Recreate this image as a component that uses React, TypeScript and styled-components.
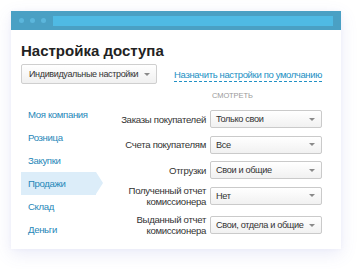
import React from "react";
import styled, { createGlobalStyle } from "styled-components";

const Global = createGlobalStyle`
  html, body { margin: 0; padding: 0; background: #ffffff; }
  body { font-family: "Liberation Sans", Arial, sans-serif; color: #333; }
`;

const Page = styled.div`
  padding: 11px 0 0 11px;
  width: 360px;
  height: 269px;
  box-sizing: border-box;
`;

const Card = styled.div`
  width: 330px;
  background: #fff;
  box-shadow: 0 5px 16px rgba(90, 100, 200, 0.13), 0 0 4px rgba(90, 100, 200, 0.05);
`;

const TitleBar = styled.div`
  height: 19px;
  background: #4aa0c4;
  display: flex;
  align-items: center;
  padding: 0 8px 0 8px;
  gap: 4px;
  box-sizing: border-box;
`;

const Dot = styled.span`
  width: 5px;
  height: 5px;
  border-radius: 50%;
  background: #5bb6dc;
  flex: none;
  margin-right: 2px;
`;

const UrlBar = styled.div`
  flex: 1;
  height: 10px;
  background: #4fbae4;
  margin-left: 1px;
`;

const Content = styled.div`
  padding: 12px 19px 8px 10px;
`;

const Title = styled.h1`
  margin: 0;
  font-size: 15px;
  line-height: 17px;
  font-weight: bold;
  color: #222;
`;

const Toolbar = styled.div`
  display: flex;
  align-items: center;
  margin-top: 5px;
  gap: 17px;
`;

const DropButton = styled.div`
  width: 137px;
  height: 20px;
  box-sizing: border-box;
  border: 1px solid #cfcfcf;
  border-radius: 2px;
  background: linear-gradient(#ffffff, #f0f0f0);
  display: flex;
  align-items: center;
  justify-content: space-between;
  padding: 0 6px 0 7px;
  font-size: 9px;
  letter-spacing: -0.35px;
  white-space: nowrap;
  color: #333;
`;

const Caret = styled.span`
  width: 0;
  height: 0;
  border-left: 3px solid transparent;
  border-right: 3px solid transparent;
  border-top: 3px solid #8a8a8a;
  flex: none;
`;

const Link = styled.a`
  font-size: 9.5px;
  letter-spacing: -0.35px;
  white-space: nowrap;
  color: #2190c4;
  text-decoration: none;
  border-bottom: 1px dashed #2190c4;
  line-height: 12px;
  margin-top: 2px;
`;

const Body = styled.div`
  display: flex;
  margin-top: 7px;
`;

const Menu = styled.div`
  width: 82px;
  padding-top: 12px;
  flex: none;
`;

const MenuItem = styled.div<{ $active?: boolean }>`
  position: relative;
  height: 23px;
  width: 75px;
  display: flex;
  align-items: center;
  padding-left: 7px;
  box-sizing: border-box;
  font-size: 9.6px;
  letter-spacing: -0.35px;
  white-space: nowrap;
  color: #1f87b8;
  background: ${(p) => (p.$active ? "#dcedf9" : "transparent")};
  &::after {
    content: "";
    display: ${(p) => (p.$active ? "block" : "none")};
    position: absolute;
    right: -7px;
    top: 0;
    border-top: 11.5px solid transparent;
    border-bottom: 11.5px solid transparent;
    border-left: 7px solid #dcedf9;
  }
`;

const Form = styled.div`
  flex: 1;
  display: grid;
  grid-template-columns: 1fr 112px;
  column-gap: 4px;
  row-gap: 7.5px;
  align-items: center;
  align-content: start;
`;

const ColHead = styled.div`
  grid-column: 2;
  font-size: 7.5px;
  color: #9a9a9a;
  letter-spacing: -0.1px;
  padding-left: 2px;
  line-height: 10px;
  margin-bottom: 1.5px;
`;

const Label = styled.div<{ $extra?: boolean }>`
  height: 18px;
  display: flex;
  flex-direction: column;
  justify-content: center;
  align-items: flex-end;
  text-align: right;
  font-size: 9.6px;
  letter-spacing: -0.3px;
  line-height: 11px;
  white-space: nowrap;
  color: #333;
  margin-top: ${(p) => (p.$extra ? "4px" : "0")};
`;

const Select = styled.div<{ $extra?: boolean }>`
  height: 18px;
  box-sizing: border-box;
  border: 1px solid #cacaca;
  border-radius: 2px;
  background: linear-gradient(#ffffff, #f1f1f1);
  display: flex;
  align-items: center;
  justify-content: space-between;
  padding: 0 6px 0 5px;
  font-size: 9.2px;
  letter-spacing: -0.35px;
  white-space: nowrap;
  color: #333;
  margin-top: ${(p) => (p.$extra ? "4px" : "0")};
`;

const menu = ["Моя компания", "Розница", "Закупки", "Продажи", "Склад", "Деньги"];

const rows: { label: string[]; value: string }[] = [
  { label: ["Заказы покупателей"], value: "Только свои" },
  { label: ["Счета покупателям"], value: "Все" },
  { label: ["Отгрузки"], value: "Свои и общие" },
  { label: ["Полученный отчет", "комиссионера"], value: "Нет" },
  { label: ["Выданный отчет", "комиссионера"], value: "Свои, отдела и общие" },
];

export default function App() {
  return (
    <Page>
      <Global />
      <Card>
        <TitleBar>
          <Dot />
          <Dot />
          <Dot />
          <UrlBar />
        </TitleBar>
        <Content>
          <Title>Настройка доступа</Title>
          <Toolbar>
            <DropButton>
              Индивидуальные настройки
              <Caret />
            </DropButton>
            <Link>Назначить настройки по умолчанию</Link>
          </Toolbar>
          <Body>
            <Menu>
              {menu.map((m) => (
                <MenuItem key={m} $active={m === "Продажи"}>
                  {m}
                </MenuItem>
              ))}
            </Menu>
            <Form>
              <ColHead>СМОТРЕТЬ</ColHead>
              {rows.map((r, i) => (
                <React.Fragment key={i}>
                  <Label $extra={i === 4}>
                    {r.label.map((l) => (
                      <span key={l}>{l}</span>
                    ))}
                  </Label>
                  <Select $extra={i === 4}>
                    {r.value}
                    <Caret />
                  </Select>
                </React.Fragment>
              ))}
            </Form>
          </Body>
        </Content>
      </Card>
    </Page>
  );
}
